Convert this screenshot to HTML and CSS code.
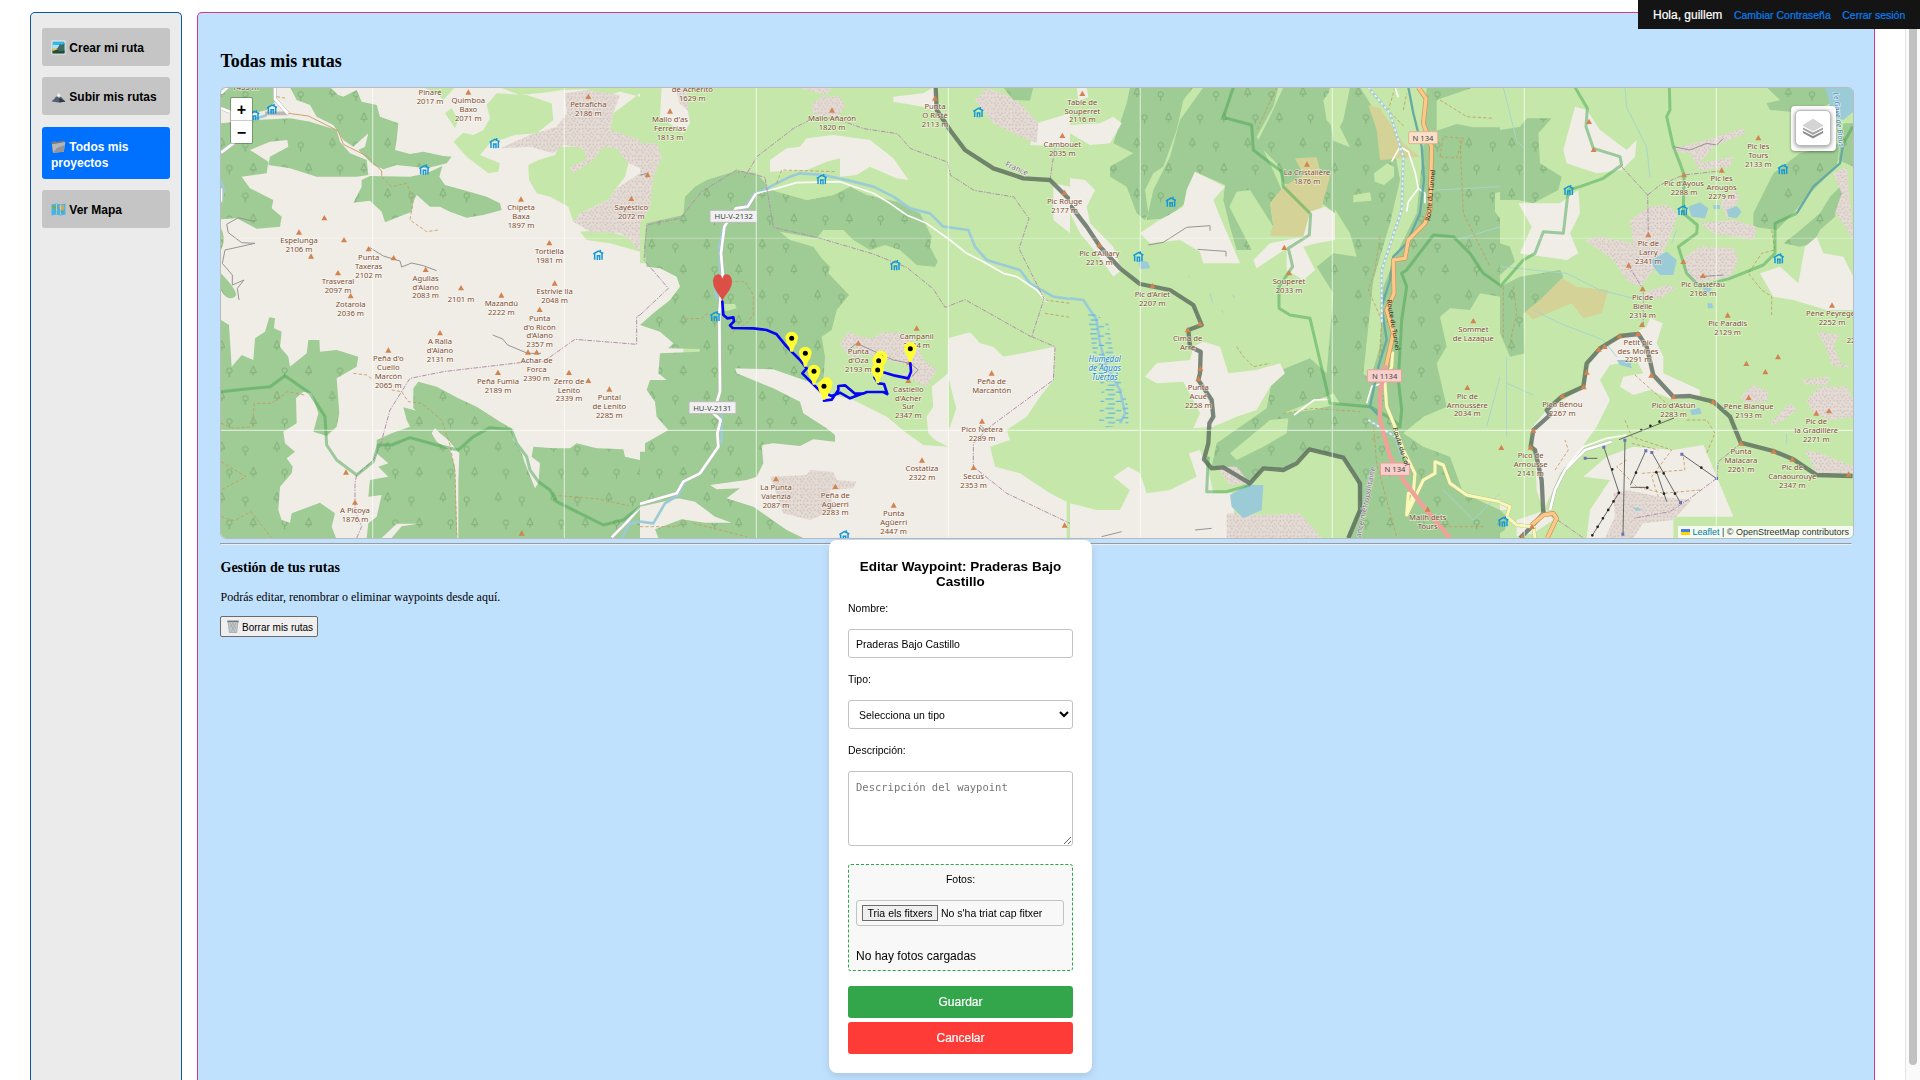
FILE: index.html
```html
<!DOCTYPE html>
<html lang="es">
<head>
<meta charset="utf-8">
<title>Todas mis rutas</title>
<link rel="stylesheet" href="styles.css">
</head>
<body>
<div class="page">
  <nav class="sidebar">
    <a class="nav-item"><svg class="ico" viewBox="0 0 15 15"><rect x=".5" y=".5" width="14" height="14" fill="#f4f1e4"/><path fill="#35b5e8" d="M1.5 1.500h12v12h-12z"/><path fill="#a9e3f5" d="M1.500 5h12v4h-12z"/><path fill="#3d6b62" d="M6 9l3-5 2 1 2.500-2v10H7z"/><path fill="#2c4a2c" d="M1.500 9.500l4-1 3 3 5-1v3h-12z"/><path fill="#e9c766" d="M1.500 8h3l2 1.500-5 1.500z"/></svg> Crear mi ruta</a>
    <a class="nav-item"><svg class="ico" viewBox="0 0 15 15"><path fill="#55606f" d="M.5 12.500L4 9l3-4.500L8.500 5l2.500 4 3.500 3.500-7 1z"/><path fill="#eef2f6" d="M5 7.500L7.200 4l1.600.8L10.500 8 9 7.500l-1 1.500-1-1.500z"/><path fill="#2e3742" d="M8 9l2 1 4.500 2.500-6 1z"/></svg> Subir mis rutas</a>
    <a class="nav-item active"><svg class="ico" viewBox="0 0 15 15"><path fill="#75797c" d="M.5 3l4-1 1 1L13 1.500l.8 1-1 10.500-11 .8z"/><path fill="#b4b7b9" d="M1 5.200L14.300 3l-1.500 9.800-10.800 1z"/><path fill="#92969a" d="M6 9l7.500-3-.8 6.800-10.700 1z"/></svg> Todos mis proyectos</a>
    <a class="nav-item"><svg class="ico" viewBox="0 0 15 15"><path fill="#48b4e6" d="M.5 2.500l5-1 4 1 5-1v11l-5 1-4-1-5 1z"/><path fill="#80a652" d="M1 4l5-.5L7 6 4.500 8 2 6z"/><path fill="#d0a75a" d="M8 4l5-1 .5 4-3 2L9 7z"/><path fill="#678d45" d="M4.500 8.500l2 1-1 3zM9 8l2.500 1-.5 3z"/><path stroke="#d4eefa" stroke-width=".6" d="M5.500 2v10M9.700 3v10"/></svg> Ver Mapa</a>
  </nav>
  <main class="content">
    <h2 class="title">Todas mis rutas</h2>
    <div class="map">
      <svg class="map-canvas" viewBox="33 24 4896 1350">
        <defs>
          <pattern id="wood" width="166" height="152" patternUnits="userSpaceOnUse">
            <path fill="#9fcb94" d="M0 0h166v152H0z"/>
            <g fill="none" stroke="#78a770" stroke-width="2.400">
              <path d="M35 22l-9 20h18zM35 42v9"/><circle cx="106" cy="43" r="8"/><path d="M106 51v12"/>
              <path d="M130 98l-9 20h18zM130 118v9"/><circle cx="58" cy="112" r="8"/><path d="M58 120v12"/>
            </g>
          </pattern>
          <pattern id="scree" width="53" height="47" patternUnits="userSpaceOnUse">
            <path fill="#e6dbd4" d="M0 0h53v47H0z"/>
            <path fill="none" stroke="#c2bdb9" stroke-width="3.500" d="M3 4l4 2M13 2l3 4M24 7l5-2M35 3l2 4M46 5l4 3M7 13l3 3M18 12l5-2M29 15l4 3M41 12l3 4M2 22l5 2M13 24l3-4M24 21l3 4M35 24l3-3M46 20l4 3M6 31l5-2M18 32l3 3M29 30l5-1M41 31l3 3M2 41l4-2M13 40l4 3M24 42l3-4M36 39l3 4M47 42l4-3"/>
          </pattern>
          <pattern id="marsh" width="52" height="28" patternUnits="userSpaceOnUse">
            <path stroke="#5db4e3" stroke-width="3.500" d="M2 5h26M34 12h16M10 20h22"/>
          </pattern>
          <path id="peak" fill="#d28350" d="M0-9L9 7H-9z"/>
          <g id="hut" fill="none" stroke="#1597d8" stroke-width="4.500"><path d="M-15-3L0-12l15 7M-11-3v17M11-5v19M6-16v7M-3 15V2h7v13"/></g>
          <g id="pin"><path fill="#ff3" d="M-4 40L-7 27Q-18 13-19-1a19 19 0 0 1 38 0Q18 13 7 27L4 40z"/><circle r="7.500" fill="#000"/></g>
        </defs>

        <!-- Western sector -->
        <svg x="0" y="0" width="1290" height="1410" viewBox="0 0 1290 1410">
          <path class="bare" d="M0 0h1290v1410H0z"/>
          <path class="grass" d="M640 22h95l-35 38-20-20zM705 100l20-15 20 35-10 25zM870 22h420v28l-60-15-50 15-50-22-70 2-60 8-70 7zM760 158l30 7 30-15 20-35-10-40 30-35 90 5 75 25 5 50-50 40-65 5-75 25-30 35 60 25-5 25-30 5-65-50-40-45zM955 255l30-15 50-15 10-25 65 0 20 15 50-15 50 5 28 35-13 50-30 40-20 30-45 20-40 20-20 25-15-45-55-30-40-10-23-40zM1290 40l-80 60-10 50 30 25 60 5zM1110 455l70-5 70 20 40-10v55l-90-25-70-10z"/>
          <path class="scree" d="M870 205l90-40 80-25 30-40-5-60 65-10 100 15-20 55-10 50 90 30v85l-40-20-30-40-40-5-30 40-60 40-10-20 50-20-10-35-60-10-30 25-70-20zM1090 425l20-25 85-40 25-35 70-45v235l-30-35-30-20-90-5z"/>
          <path class="wood" d="M33 22h167v38l-30 30-40 10-97-10zM33 130l107-10 100-5 60 10 80 25 10 35 30 35 50 20 5 45-35 5H320l-80-25-65-10 5-25 55-30-3-20-52 5-60 25 55 35-5 35-75 10 25 35 70 35-5 25 30 25-5 30-70 6-60-31-47 3zM240 22l20 38 40 15 20 35 50 25 30 45 30 20 45-40-10 40-20 10 45 45 30 13 40-13 90 10 60-15 15-20-25-2-60-13-40 7-45-12 5-30 5-50-55-20-10-35-45-10-15-35-40 20-15-5-25-23zM455 300l25-12 120 2 50-10 47-22-9 32 17 25 55 15 70 20 40 20 5 20-55 15-50 8-50-18-30-15h-30l-40-35-10 20-5 30-80 32-10-32-35-33-50 6 25-48zM33 445q17 30 0 65zM33 580q57 60 42 70-25 15-42-20zM33 720l24 15 8 125 30-35 35 15 5-65 30-20 13-43 17 3-3 30 23 10-5 45 25 30 5 30 50-40 5-40h33l2 35 50-5 65 20-5 30-60 35 8 105-8 40-30 28-40-13 15-55-20-60-25-5-22 20 2 75-40 25 5 35 30 25-25 20 18 25-3 20-35 40-5 70 10 30 25 8 5-28 85-32 45 32-10 40 13 34H33zM610 925l15-20 55 15 65 35 55 25 70 45 35 20 5 35 25 40 10 30 30 75 10-15 5-60-25-20 5-30 60 5h50l20-15 60 15 80 3 5 22 45 10v234H745l0-174 3-80-33-40-25-20-30-30-50-45zM580 982l50 13 50 40-15 25 15 25 40 25 15 50 7 214H545l30-35 50-8-65 0-45 43h-45l5-44 25-20 15-65-40 5 5-50 55-10-30-30 30-10-35-30v-40l45-20 55-20-10-20z"/>
          <path class="river" d="M33 300l8 30-8 40M40 215l30-22M130 118l40-12M1290 1325l-30 5-25 44"/>
          <path class="casing" d="M33 40l20-18M33 85l27 10M195 22v35l40 45M235 100h-70M33 218l40-30M33 325v40M1205 1372l45-45 40-45"/>
          <path class="road" d="M33 40l20-18M33 85l27 10M195 22v35l40 45M33 218l40-30M33 325v40M1205 1372l45-45 40-45"/>
          <path class="track" d="M235 100l60 8 90 45 15 40 70 35 45 45v15"/>
          <path class="footpath" d="M200 50l30 5M515 290l30 30 45-10 20 50-10 60 50 35 35-5M430 880l40 5 20 15M545 930l30 5 20 30 40 5 60 50 25 75 15 80 5 190M33 1030l40 15 55-5 5-70 50 0 50-35 50 10M33 1145l75 45-75 40M33 1310l40 12 50-27 60 77M1045 1247l120 10 90 20"/>
          <path class="boundary" d="M440 1374l15-34-20-50v-80l5-25 50-45 20-40 30-110 60-95 100-20 230-27 70-3 95-67 185 15v-83l10-5"/>
          <path class="cliff" d="M135 425l-50-12-35 20 5 25 40 30 40 2-90 20-8 40 30 35v30l35-15-20 25 5 35M480 503l40 25 50 15 5 18 30-12 35 8 40 15M848 765l30 12 15 18 60 25h40"/>
          <path class="reserve" d="M33 935l97-10 50-5 45-33 75 53 45 70 5 85 30 45 60 45 50-40 15-50h40l55-22 80 22 65 15 45-40 50-27 65 7 15 40 30 40 10 40 25 35 35 25 20 35 40 20 100 50 60-15 50-40"/>
        </svg>

        <!-- Hecho valley -->
        <svg x="1290" y="0" width="1290" height="1410" viewBox="0 0 1290 1410">
          <path class="grass" d="M0 0h1290v1410H0z"/>
          <path class="bare" d="M0 550h130v824H0zM285 865l115 3 120 42 40 30 80 20 100 50 60 50 50 35 75 5v274H340L200 1200l170-100zM390 240l50-35 40-5 20-25 80-10 110 15 70 55 45 65-35-5-80-35-40 25-50 5v-55l-40 10-60 25-110 5zM65 22h40l35 48 10 60-20 30-70-50zM760 50l90-10 30-18 10 28-5 45-35-15-90-15zM1190 130l100-30v100l-120-5zM1240 310l50 10v140l-50-40zM925 775l65-18 30 33 40 10 30 30 80-15 75-15-5 100-40 50-40 60-60 40 10 30-60 20 15 60 75 20 90 60 50 25v109H925v-274l-40-20-20-20-5-50 20-30-5-60 50-40z"/>
          <path class="grass" d="M925 890l12 50 12 45-20 60-4 0zM1070 1130l60-30 60-70 100-50v285l-50-25-90-60-75-20z"/>
          <path class="scree" d="M600 790l25-35 35 15 40 5 30-20 60 5 40 30 20 50 40 30-30 50-40-20-40-20-40-10-120-50zM390 1190l110-5 10-15 70 5 10 25 60 5-10 20-70 5 10 60-70 30-80-20zM515 75l30-25h55l15 30-25 30-70-5zM470 22h105l-15 23zM0 190h50l15 40-25 60-10 90-30 50zM105 22h35l5 70-25-20zM1005 60l35-35 60 20 40 25 55 60-5 60-60-25-70-35z"/>
          <path class="grass" d="M625 800l75 30 100 25 20 25-60 0-60-20z"/>
          <path class="wood" d="M1090 22h90l-10 40-50-2zM20 430l110-25 5-55 30-30 35-20 90-28 60 8 35 40 15 10 100 30 80-15 50-25 50 25 90 20 70 35 35 70-5 30 23 45-8 15-55-5-50-45-45-15-45 15-50-30-30-30h-60l-20 25-110-20 30 25 70 20 25 35 25 25-5 20 62 65-37 45-15 60-30 20 10 60-5 75-30 5-120-42-115-3 5 15 110 45 80 40 10 35 70 45 25 20v20l-65-7-40 20-80-8-35 5 5 55-20 40-30 10-110 15 20 13 70-3-40 30 80 25 100 70 50 24H0v-259l15 0v-25l35-20 35-20-35-40-5-45-25-35 10-30h50l-25-20 5-60 118-5 2-8-95-2 15-15-40-35-60-20 40-35 50-40 30-40-10-30-50-25-40-5-8-60z"/>
          <path class="bare" d="M0 1280l115-25 50 10 60 45 50 18-80 0-70-10-80 30 10 26H0z"/>
          <path class="grass" d="M240 672l45 0 5 13-30 8-20 0zM380 320l60-20 110 5 90 10-60 30-80 15-90-25z"/>
          <path class="river" d="M0 1325l40 5 35-60 40-25 20-40 50-30 48-75M245 1090v-90M232 660l-6-30 16-40-4-90 12-60 60-50 30-45 70-35 40-20 30-10 70 5 90 20 60 15 60 30 50 35 60 15 40 40 75 10 20 50 35 40 100 30 30 40 70 40 50 7"/>
          <path class="casing" d="M0 1272l110-32 20-35 50-25 55-80-3-40 10-40-22-20 20-65-2-235 10-120-5-60 10-80 35-55 35-5 25-40"/>
          <path class="road" d="M0 1272l110-32 20-35 50-25 55-80-3-40 10-40-22-20 20-65-2-235 10-120-5-60 10-80 35-55 35-5 25-40"/>
          <path class="lane" d="M350 340l60-15 60-17 130-3 100 35 50 30 50 35 60 25 70 50 50 40 50 25 60 35 40 10 60 40 30 35"/>
          <path class="footpath" d="M410 310l15-40 160 5M135 717l50-2 20-15M270 605h45l25 40v60l-20 25-50 30M1215 660l75 10M1215 700l75 12M0 1340l110 0 30-18M160 1330l160 40"/>
          <path class="boundary" d="M0 705l85-80-73-85 8-105 100-20 65-80 105-65 85 22 25 150 130 30 170 50 100 40 80 65 35 55 60-23 200 112 37-115-75-150 30-90-45-65-120-20-70-45-10-40-110-40-40-45-100-15-90-32h-60l-60 30-110 85-40 65M1175 770l70 30-5 100-190 140-50 50v70l100 80 190 90M1230 300l15-100"/>
          <path class="cliff" d="M625 810l25-20 110 50 50 10 25 20-20 20M0 285l25-5"/>
          <path class="frontier" d="M887 22l3 68 40 60 45 60 85 55 90 30 80 5 60 60"/>
          <g class="shield"><rect x="210" y="391" width="141" height="36" rx="3"/><text x="281" y="417">HU-V-2132</text><rect x="147" y="965" width="141" height="36" rx="3"/><text x="217" y="992">HU-V-2131</text></g>
          <text class="country" transform="translate(1094 258) rotate(24)">France</text>
        </svg>

        <!-- Aspe valley -->
        <svg x="2580" y="0" width="1290" height="1410" viewBox="0 0 1290 1410">
          <path class="grass" d="M0 0h1290v1410H0z"/>
          <path class="wood" d="M180 22h190l-30 38-20 90-40 110-30 20-25 50 10 70-10 20-25-20-30-80-50-30v-30l70-40-60-30 20-60 20-60zM400 22h225l-15 58-50 90 40 80 35 80-35 40 10 70-70-110-40 5-22 45 67 130h-45l-20-70-20-80 5-45-90-40-25 55-5 40-55 45-60 5 20-90 50-100 30-110zM640 22h150l-30 38 10 60 60 70v40l-40 40 5 130-25-20-70-50-60-20-20-60-60-60 40-80zM840 22h450v628l-60-10-30 50-60-5-30 25 20 90-30 50 30 130-70 30-60 50 60 40 80 30 40 110 110 50v84H830l40-94-10-90-40-55-100-25-70 55h-70l-40 45-60-35-55-15 15-70 150-105 20-105 110-45 50 45 20-240-50-80 50-40 70 10-20-70-50-80-10-180 40-80z"/>
          <path class="grass" d="M870 22h200l-10 178-20 200-50 100-50 120-10 180-30 100-20-20 30-280 50-170 30-130-20-110-70-120zM912 280l40-30 20 10v30l-30 25-28-10zM850 345l50-8 5 25-55 5zM480 1120l120-100 55-5-5 45-70 40-80 40zM1100 60l110-38h80v120l-80 0-50-10-60 20zM1275 340l15-5v80l-15-20zM640 1000l100-40 50-20 20 30-80 20zM780 22l30 0 0 120 30 60-50-20-20-120z"/>
          <path class="tan" d="M895 75l35 10 50 75 20 30 50 40-120 10-10-90zM675 235l65-3 10 38 30 20-25 90-55 90-100-2 10-38-10-60 40-50 60-35z"/>
          <path class="bare" d="M350 330l25-55 90 45-35 40 20 50 60 140H400l-10-35-60-35-90 10-30-30 50-35 80-45zM550 540l50-50 100-20 20-75 45-15 30 20v80l-55 10-40 10 35 70-35 30-50-30v-65l-90 60zM0 295l45 5 30 30-25 50 10 50 70 70 25 70-25 20-50-70-50-60-30-60zM0 135l90-5 40-20 25 20-35 60-60 5-60-35zM225 890l35-40 100-10 10-40 30-15 50 15 25 80 85-10 70-20 15 30-45 40-40 70-60 20-70 30-60 5 20-45-50-95-80 5zM0 1270l80 20h70l30-60-50-40 45-30 35 20 20 60 70-10 80-40-23-70 33-10 25 60 15 70h70l-20 134H0zM20 22h30l5 30-30 10z"/>
          <path class="scree" d="M440 1160h60l40 50-60 5zM470 1300l110 5 110-5 65 74H470z"/>
          <path class="water" d="M480 1245l50-30h50l-5 75-55 25-35-35zM203 540l30 5 8 20-30 3z"/>
          <path class="stream" d="M420 640l8 30M485 645l10 8M455 690l5 8M355 590l5 2M1290 440l-130 40M1100 330l190-10M1290 890l-40 150M1120 1230l90 90 80-80"/>
          <path class="river" d="M0 655l40 5 40 60 10 70 20 70 40 70 15 70-15 30"/>
          <path class="marsh" d="M50 685l65 45 20 120 40 130v55l-90 10 10-120-30-130z"/>
          <path class="footpath" d="M620 22l-60 130M975 22l-20 70 50 50M1110 60l80 50 80 5M1110 230l10-60 60 5-20 60zM1170 180l10 220 80 160M930 470l-15 100-20 60 40 90-10 160M640 1000l90-15 140 10M500 800l20 30 30 30 50-10M910 1030l10 120 60 220M1120 1340h120M960 1060l-60 20M1000 90l10-50"/>
          <path class="lane" d="M975 22l10 30M965 245l25-45 25 15 20 60 10 50-30 40-5 30M1045 325l20 15v30M672 1005l60-45 45-2M890 970l15-50 25-8"/>
          <path class="reserve" d="M490 22l-30 90 85 23 5 75 85 65 5 45 82 82-4 63-63 40 13 55-41 60v65l33 20 60 10 60 255 120 10 70 40 20 20 5-50-10-90 10-180 15-100-15-40 15-10 80-105 60 5 50 50 40 60 60 42M415 1130l-5 105 60 0 70-20"/>
          <path class="teal" d="M1015 22l15 78 25 100 7 100-12 100-40 90-40 40-10 70-25 80 15 100-25 80-25 120 30 30"/>
          <path class="rail" d="M895 22l65 78 40 130-5 160-60 180v160M895 1020l80 50 20 60"/>
          <path class="raildash" d="M895 22l65 78 40 130-5 160-60 180v160M895 1020l80 50"/>
          <path class="yellow-casing" d="M968 815l-3 45-20 50 5 70 25 60 25 70 35 70-5 60-20 65 5-65 15 0M1010 1305l50-105 35-20v-35l25 10 20 55 50 35 100 20"/>
          <path class="yellow" d="M968 815l-3 45-20 50 5 70 25 60 25 70 35 70-5 60-20 65 5-65 15 0M1010 1305l50-105 35-20v-35l25 10 20 55 50 35 100 20"/>
          <path class="trunk-casing" d="M1045 22l23 33-8 75 25 70-5 190-15 40-50 50-10 55-35 5 2 100-22 50 20 70-22 100"/>
          <path class="trunk" d="M1045 22l23 33-8 75 25 70-5 190-15 40-50 50-10 55-35 5 2 100-22 50 20 70-22 100"/>
          <path class="red" d="M946 855l-16 85v80l30 110 40 70 60 80 80 94"/>
          <path class="cliff" d="M235 495l45-8 70-45 70-5v15M383 508l40 3 45 3v15M375 1350l50-5M95 1370l60-15"/>
          <path class="frontier" d="M0 375l50 65 40 60 60 65 60 47 90 18 70 45 25 60-40 15 5 50 32 15-2 65-5 20 40 60 5 50-12 20-3 60-13 48 23 27 35-3 80 48 40-45 60 5 40-20 38-42 102 25 50 77v80l-35 84"/>
          <g class="shield peach"><rect x="1016" y="155" width="87" height="36" rx="4"/><text x="1059" y="182">N 134</text></g>
          <g class="shield pink"><rect x="892" y="869" width="103" height="37" rx="4"/><text x="944" y="896">N 1134</text><rect x="931" y="1149" width="88" height="37" rx="4"/><text x="975" y="1176">N 134</text></g>
          <text class="street" transform="translate(1080 424) rotate(-84)">Route du Tunnel</text>
          <text class="street" transform="translate(950 660) rotate(80)">Route du Tunnel</text>
          <text class="street" transform="translate(968 1045) rotate(72)">Route du Col</text>
          <text class="country" transform="translate(872 1374) rotate(-78)">ance métropolitaine</text>
          <g class="wetland"><text x="104" y="846">Humedal</text><text x="104" y="872">de Aguas</text><text x="104" y="899">Tuertas</text></g>
        </svg>

        <!-- Astún and Ayous -->
        <svg x="3870" y="0" width="1290" height="1410" viewBox="0 0 1290 1410">
          <path class="grass" d="M0 0h1290v1410H0z"/>
          <path class="tan" d="M65 690l115-100 50 30 95 10-20 70-55 15-35-45-115 48z"/>
          <path class="wood" d="M0 150l60-10 20-25h75l-40 45 5 90 65 40-10 40-75 40-45-10H0zM0 490l30 10 15 45-45 40zM0 620l60-30 120-20 10 20-70 70-50 40 5 120-45 10-30-70zM800 22h180l10 48-60 30-120-10-10-20 40-10zM760 400l60-120 80-60 120-30-10 70-80 80-50 60-50 50-70-10zM850 490l40-30 70-60 30-50 50-50-35 110-45 40-20 40-40 10zM1030 130h30v130l-45-20zM0 1290l20 20-5 40-15 10z"/>
          <path class="bare" d="M225 80l35 10 40 60 80 60 30-30-5 50-40 40-75 10-90-30-10-40zM55 370h125l55-40 5 70-30 60 25 60-35 20-140-20 35-80zM780 580l60-20 55 50 20-110 35-30 20 50 60 10 30 60v100h-80l-100-30-60-10zM90 1050l50-60 115-70 15-70 40-50 130-60 10-25 38 15-18 60 20 40v50l110 50v15l-80 15-70-30-50 15-40-25 10-30 60-10-20-40-80 15-30 45 30 60-40 80-50 70-60 70-30 70-20 40-20-60-5-120zM320 1130l80-30 120 10 90-15 40 95 50 120H520v64H260l10-84 60-90-80-10zM50 1320l90-30 20 30-60 40-50 10zM0 1290h20v-20H0z"/>
          <path class="scree" d="M520 205l100-25 110-35 5 15-95 40-40 50 100-20-10 30-90 10-30-50-50-5zM255 480l45-10 100 20-10-70 60-40 50-5 35 25-25 70-40 90-50 60-40-20-40-60zM440 635l60-20 30 10-50 30-60 0zM555 530l45-30 100 5 15 35-25 50-110 20-25-40zM600 430l100-10 70 20-10 40-120-20zM660 370l40-40 20 20-35 70zM920 960l40-40h80l20 40v50l-70 10-50-20zM905 900l85-10-10 25h-60zM720 950l40-35 45 20-5 30-60 5zM340 1240l40-10 100 20 95 10-55 60-90 10-30 44h-85l30-64zM1000 280l40-20 20 220-30-50-25-30 20-60zM915 1110l45 10 100 40v20H950zM810 1030l60-60 20 20-40 30-35 15zM950 755l70 10-20 30 20 50 35 20-60-10-20-60z"/>
          <path class="water" d="M565 380l35-13 25 18-10 30-40-5zM680 390l30-12 15 17-15 20-25-5zM640 375h20v12h-20zM455 540l45-25 30 25-10 45h-40l-20-25zM350 840l40 0 5 25-35-10zM570 990l30-7 5 18-30 5zM622 670l15 0 2 15h-15zM610 620l25 5-5 12-20-2zM975 22h85v73l-30 25-30-10zM395 1280l35 8-20 5z"/>
          <path class="stream" d="M375 22l5 60 60 120 10 90M10 22l25 100 15 60 20 20M0 560l200 20 100 50 100 25M100 690l80 40 130 50 40 50M20 830v80l80 35M20 910v160M530 450l-15 40M860 1060v30"/>
          <path class="footpath" d="M40 620l10 80-20 90M10 620v160M815 450l10 60-40 10-40 60 40 50 30 20v55M375 1020l20 50 120 40-60 80 20 60M560 1020l60 0 25 40-25 60M165 1170l40-60-10-30M405 885l100 90 30 30M550 1130l5 40-130 10M380 1140l-30 20 60 60 80 20 110-10M395 1090l80 20"/>
          <path class="casing" d="M150 1290l15-60 30-60 60-60 80-25"/><path class="road" d="M150 1290l15-60 30-60 60-60 80-25"/><path class="lane" d="M200 1160l50-60 70-25 60-10"/>
          <path class="boundary" d="M365 260l78 85 2 120M443 345l37-30 70-30 110-12M385 555l45 75 0 110M650 1195l5-50 68-55M650 1195l-80 60-60 40-110 20M130 1290l120 84"/>
          <path class="cliff" d="M520 200l50 10 50-20 30 5 20-20M600 590l70-5"/>
          <path class="reserve" d="M225 22l37 63-4 55 22 65 80 25 5 25-55 40-70 25-35 10-15 130-60-5-25 65-35 20-70 80M508 22l2 68-10 20 20 90 20 50 12 35-2 115 42 35-2 25-55 40 25 80 40 40 90-25 100-40 35-35v-90l65-30M1058 140l-28 50"/>
          <path class="teal" d="M1030 190l-10 60-80 70-50 80"/>
          <path class="frontier" d="M60 1374l35-34 35-40-5-100-20-90-13-10 8-50 50-45-10-15 45-40 65-30 10-70 40-45 60-37 55-6 25 38 20 85 60 65 50-2 70 17 50 45 32 78 98 25 60 25 70 47 108 3"/>
          <path class="yellow-casing" d="M0 1268l30 12-10 30 30 25 50 5 5 34"/><path class="yellow" d="M0 1268l30 12-10 30 30 25 50 5 5 34"/>
          <path class="trunk-casing" d="M95 1335l35-30 30-5 10 15-28 59"/><path class="trunk" d="M95 1335l35-30 30-5 10 15-28 59"/>
          <path class="lift" d="M277 1366l80-128-45-136M357 1079l165-65M369 1362l6-281M391 1222h53M391 1215l46-102M456 1118l85 150M470 1175l30 90M546 1123l104 73M256 1135h36"/>
          <path class="lift-towers" d="M277 1366l80-128M424 1050l63-29M337 1168h1M408 1178h1M491 1180h1M604 1163h1M442 1223h1M469 1177h1M492 1241h1M525 1241h1"/>
          <path fill="#6a72b8" d="M251 1130h9v9h-9zM307 1097h9v9h-9zM370 1076h9v9h-9zM433 1108h9v9h-9zM451 1113h9v9h-9zM541 1118h9v9h-9zM645 1191h9v9h-9zM537 1263h9v9h-9zM364 1358h9v9h-9z"/>
          <text class="lake" transform="translate(1000 38) rotate(84)">Le Gave de Bious</text>
        </svg>

        <path class="seam" d="M488 22v1352M1063 22v1352M1639 22v1352M2215 22v1352M2791 22v1352M3367 22v1352M3943 22v1352M4519 22v1352M33 1051h4896"/>
        <path class="seam faint" d="M33 475h4896"/>
        <g id="labels"></g>
        <g transform="translate(1290 0)">
          <path class="route" d="M247 665l3 40 12 10 18-3 2 12-12 12 8 8 62 1 40 5 30 13 30 37 40 40 20 25-13 15 18 18 37 37M552 962l23-3 20-29 0-12 20-2 30 25 25 0 10-5 50 0 12 6-10-30-17-2-12-18M555 940l20 8 25-10 30 17 40-15M725 875l40 12 40 8 8-20-2-25"/>
          <path fill="#dc4f47" d="M247 662C239 645 219 628 219 604c0-22 24-31 28-8 5-23 29-14 29 8 0 24-20 41-29 58z"/>
          <use href="#pin" x="455" y="775"/><use href="#pin" x="496" y="820"/><use href="#pin" x="522" y="874"/><use href="#pin" x="559" y="912"/><use href="#pin" x="552" y="919"/><use href="#pin" x="723" y="832"/><use href="#pin" x="716" y="842"/><use href="#pin" x="713" y="870"/><use href="#pin" x="811" y="806"/>
        </g>
      </svg>
      <div class="zoom"><span>+</span><span>−</span></div>
      <div class="layers"><div class="layers-button"><svg viewBox="0 0 22 21"><path fill="#8c8c8c" d="M1 15l10 5.500L21 15v-2l-10 5-10-5z"/><path fill="#a3a3a3" d="M1 11.500l10 5.500 10-5.500v-2l-10 5-10-5z"/><path fill="#d4d4d4" stroke="#bbb" stroke-width=".4" d="M11 1l10 6.500-10 5.500L1 7.500z"/></svg></div></div>
      <div class="attribution"><svg viewBox="0 0 12 8"><path fill="#4C7BE1" d="M0 0h12v4H0z"/><path fill="#FFD500" d="M0 4h12v4H0z"/></svg> <a>Leaflet</a> | © OpenStreetMap contributors</div>
    </div>
    <hr class="rule">
    <h3 class="subtitle">Gestión de tus rutas</h3>
    <p class="hint">Podrás editar, renombrar o eliminar waypoints desde aquí.</p>
    <button class="clear"><svg viewBox="0 0 12 13"><path fill="#c3c8cb" stroke="#92989c" stroke-width=".6" d="M1 1.500h10l-1.300 11H2.300z"/><path fill="none" stroke="#858b90" stroke-width=".4" d="M3 3l5 9M6 3l3 6M9 3L4 12M6 3L3 8"/><path fill="#6f757a" d="M.3.600h11.400v1.500H.3z"/></svg><span>Borrar mis rutas</span></button>
  </main>
</div>

<div class="userbar"><span>Hola, guillem</span><a>Cambiar Contraseña</a><a>Cerrar sesión</a></div>
<div class="scrollbar"><div class="thumb"></div></div>

<form class="modal">
  <h3 class="modal-title">Editar Waypoint: Praderas Bajo Castillo</h3>
  <label>Nombre:</label>
  <input class="field" type="text" value="Praderas Bajo Castillo">
  <label>Tipo:</label>
  <div class="field select"><span>Selecciona un tipo</span><svg viewBox="0 0 10 7"><path fill="none" stroke="#000" stroke-width="2" d="M1 1l4 4 4-4"/></svg></div>
  <label>Descripción:</label>
  <textarea class="field area" placeholder="Descripción del waypoint"></textarea>
  <div class="photos">
    <label>Fotos:</label>
    <div class="file"><span class="file-button">Tria els fitxers</span><span>No s'ha triat cap fitxer</span></div>
    <p>No hay fotos cargadas</p>
  </div>
  <button class="action save" type="button">Guardar</button>
  <button class="action cancel" type="button">Cancelar</button>
</form>
<script src="map.js"></script>
</body>
</html>
```
FILE: styles.css
```css
* { box-sizing: border-box; }
body { margin: 0; height: 1080px; overflow: hidden; background: #fff; font: 12px "Liberation Serif", serif; color: #000; }
.page { display: flex; gap: 15px; padding: 12px 45px 0 30px; height: 1080px; }
.sidebar { width: 152px; border: 1px solid #0a55ae; border-bottom: 0; border-radius: 5px 5px 0 0; background: #ebebeb; padding: 15px 11px; display: flex; flex-direction: column; gap: 11px; }
.nav-item { padding: 12px 9px 10px; border-radius: 3px; background: #c5c5c5; font: bold 12px/16px "Liberation Sans", sans-serif; min-height: 38px; }
.nav-item.active { background: #0070ff; color: #fff; min-height: 52px; padding-top: 12px; margin: 1px 0 0; padding-bottom: 8px; }
.ico { width: 15px; height: 15px; vertical-align: -3px; }
.content { width: 1678px; border: 1px solid #d03a8e; border-bottom: 0; border-radius: 5px 5px 0 0; background: #c0e1fe; padding: 0 22px; }
.title { font-size: 18px; line-height: 20px; margin: 38px 0 16px; text-indent: .5px; }

.map { position: relative; width: 1634px; height: 452px; border: 1px solid #bbb; border-radius: 6px; overflow: hidden; }
.map-canvas { display: block; width: 1632px; height: 450px; font-family: "Noto Sans", sans-serif; }
.bare { fill: #f0ede6; }
.grass { fill: #c5e8aa; }
.wood { fill: url(#wood); }
.scree { fill: url(#scree); }
.marsh { fill: url(#marsh); }
.tan { fill: #d4d297; }
.water { fill: #9bcbd7; }
.river, .stream, .teal, .casing, .road, .lane, .track, .footpath, .boundary, .cliff, .reserve, .frontier, .rail, .raildash, .trunk, .trunk-casing, .yellow, .yellow-casing, .red, .lift, .lift-towers, .seam, .route { fill: none; stroke-linejoin: round; }
.river { stroke: #9bcbd7; stroke-width: 8; }
.stream { stroke: #a6d5cc; stroke-width: 3; }
.teal { stroke: #67aaa4; stroke-width: 7; }
.casing { stroke: #b9b9b5; stroke-width: 11; }
.road { stroke: #fff; stroke-width: 8; }
.lane { stroke: #fdfdfb; stroke-width: 5; }
.track { stroke: #d0a071; stroke-width: 3; }
.footpath { stroke: #c39a5f; stroke-width: 2.500; stroke-dasharray: 10 6; }
.boundary { stroke: #b38fae; stroke-width: 3; stroke-dasharray: 14 4 4 4; }
.cliff { stroke: #969494; stroke-width: 3; }
.reserve { stroke: #46a551; stroke-opacity: .5; stroke-width: 9; }
.frontier { stroke: #59685a; stroke-opacity: .78; stroke-width: 13; }
.rail { stroke: #a6cbd0; stroke-width: 8; }
.raildash { stroke: #eaf3f0; stroke-width: 5; stroke-dasharray: 8 7; }
.yellow-casing { stroke: #c6c484; stroke-width: 12; }
.yellow { stroke: #f7f9ba; stroke-width: 9; }
.trunk-casing { stroke: #cb9450; stroke-width: 14; }
.trunk { stroke: #fcc98d; stroke-width: 10; }
.red { stroke: #f0a19a; stroke-width: 13; }
.lift { stroke: #4d4d4d; stroke-width: 2.500; }
.lift-towers { stroke: #222; stroke-width: 8; stroke-linecap: round; stroke-dasharray: 0 30; }
.seam { stroke: #fff; stroke-opacity: .6; stroke-width: 3.500; }
.faint { stroke-opacity: .25; }
.route { stroke: #0505f2; stroke-width: 8; stroke-linecap: round; }
.shield rect { fill: #f0f0f0; stroke: #bbb; stroke-width: 3; }
.shield text { font-size: 23px; fill: #444; text-anchor: middle; }
.shield.peach rect { fill: #fae0c8; stroke: #e3b58d; }
.shield.pink rect { fill: #f9cfcb; stroke: #e4a09a; }
.country { font-size: 23px; fill: #8a6d90; stroke: rgba(255,255,255,.6); stroke-width: 3; paint-order: stroke; }
.street { font-size: 20px; fill: #2b2418; }
.lake, .wetland { font-size: 22px; font-style: italic; fill: #3d84b5; stroke: rgba(255,255,255,.7); stroke-width: 4; paint-order: stroke; }
.wetland { font-size: 24px; text-anchor: middle; fill: #1583c9; }
.peak-name { font-size: 23px; fill: #7d4b2c; text-anchor: middle; stroke: rgba(255,255,255,.6); stroke-width: 4; paint-order: stroke; }

.zoom { position: absolute; left: 9px; top: 9px; width: 23px; height: 47px; border: 1px solid rgba(0,0,0,.25); border-radius: 2px; background: #fff; background-clip: padding-box; font: bold 16px/23px "Liberation Sans", sans-serif; text-align: center; }
.zoom span { display: block; height: 22px; }
.zoom span + span { border-top: 1px solid #ccc; height: 23px; }
.layers { position: absolute; right: 17px; top: 18px; width: 45px; height: 45px; padding: 4px; border-radius: 4px; background: #fff; box-shadow: 0 1px 3px rgba(0,0,0,.4); }
.layers-button { width: 36px; height: 36px; border: 1px solid #bbb; border-radius: 5px; background: #fff; box-shadow: 0 1px 4px rgba(0,0,0,.45); display: grid; place-items: center; }
.layers-button svg { width: 22px; height: 21px; }
.attribution { position: absolute; right: 0; bottom: 0; height: 12px; padding: 0 4px 0 3px; background: rgba(255,255,255,.8); font: 9px/12px "Liberation Sans", sans-serif; color: #333; white-space: nowrap; }
.attribution svg { width: 9px; height: 6px; margin-right: 0; }
.attribution a { color: #0078a8; }

.rule { width: 1632px; margin: 4px 0 0; }
.subtitle { font-size: 14px; line-height: 16px; margin: 15px 0 14px; text-indent: .5px; }
.hint { margin: 0 0 12px; line-height: 14px; text-indent: .5px; }
.clear { display: flex; align-items: center; gap: 3px; width: 98px; height: 21px; padding: 0 0 0 6px; border: 1px solid #6b6b6b; border-radius: 2px; background: #efefef; font: 10px "Liberation Sans", sans-serif; color: #000; white-space: nowrap; }
.clear svg { width: 12px; height: 13px; flex: none; }
.clear span { padding-top: 2px; }

.userbar { position: fixed; right: 0; top: 0; z-index: 5; width: 282px; height: 29px; padding-left: 15px; display: flex; gap: 11.500px; align-items: center; background: #141414; font: 12px "Liberation Sans", sans-serif; color: #fff; white-space: nowrap; -webkit-text-stroke: .2px; }
.userbar a { color: #0a7ff0; font-size: 10.500px; padding-top: 1px; }
.scrollbar { position: fixed; right: 0; top: 0; width: 15px; height: 1080px; background: #fafafa; border-left: 1px solid #e4e4e4; padding-left: 3px; }
.thumb { width: 8px; height: 1065px; background: #c1c1c1; border-radius: 0 0 4px 4px; }

.modal { position: fixed; left: 829px; top: 540px; width: 263px; height: 533px; padding: 19px; border-radius: 8px; background: #fff; box-shadow: 0 3px 8px rgba(0,0,0,.12); font: 12px "Liberation Sans", sans-serif; }
.modal-title { margin: 0 0 12px; font-size: 13.500px; line-height: 15px; text-align: center; }
.modal label { display: block; font-size: 10.500px; line-height: 13px; height: 28px; padding-top: 1px; }
.field { display: block; width: 225px; height: 29px; margin: 0 0 14px; padding: 1px 7px 0; border: 1px solid #c3c3c3; border-radius: 3px; background: #fff; font: 10.500px "Liberation Sans", sans-serif; color: #000; }
.select { display: flex; align-items: center; justify-content: space-between; padding: 1px 3px 0 10px; }
.select svg { width: 10px; height: 7px; margin-bottom: 2px; }
.area { height: 75px; margin-bottom: 18px; padding: 9px 7px; font: 10.500px "DejaVu Sans Mono", monospace; resize: vertical; }
.photos { width: 225px; height: 107px; padding: 7px; border: 1px dashed #28a745; border-radius: 3px; background: #f8f8f8; margin-bottom: 15px; }
.photos label { text-align: center; }
.file { display: flex; align-items: center; gap: 3px; width: 208px; height: 26px; padding: 0 5px; border: 1px solid #c3c3c3; border-radius: 3px; font-size: 10.500px; white-space: nowrap; }
.file-button { width: 76px; height: 16px; text-align: center; border: 1px solid #6b6b6b; background: #efefef; line-height: 15px; }
.photos p { margin: 23px 0 0; line-height: 14px; }
.action { display: block; width: 225px; height: 32px; margin-bottom: 4px; border: 0; border-radius: 3px; color: #fff; font: 12px "Liberation Sans", sans-serif; -webkit-text-stroke: .2px; }
.save { background: #33a64c; }
.cancel { background: #ff3b37; }
```
FILE: map.js
```js
// Summits: x, y of the triangle, then the label lines separated by "|".
const peaks = [
  [775,37,"Quimboa|Baxo|2071 m"],[1135,50,"Petraficha|2186 m",30],[933,358,"Chipeta|Baxa|1897 m"],[1264,356,"Sayéstico|2072 m"],
  [267,457,"Espelunga|2106 m"],[343,414],[402,480],[303,529],[476,507,"Punta|Taxeras|2102 m"],[551,534],[384,579,"Trasveral|2097 m"],
  [647,569,"Agullas|d'Alano|2083 m"],[753,624,"2101 m",42],[874,646,"Mazandú|2222 m"],[422,648,"Zotarola|2036 m"],[1018,489,"Tortiella|1981 m"],
  [1034,610,"Estrivie lla|2048 m"],[989,689,"Punta|d'o Ricón|d'Alano|2357 m"],[954,817],[980,817,"Achar de|Forca|2390 m"],
  [690,759,"A Ralla|d'Alano|2131 m"],[535,811,"Peña d'o|Cuello|Marcón|2065 m"],[864,878,"Peña Fumia|2189 m"],[1077,878,"Zerro de|Lenito|2339 m"],
  [1135,902],[1198,928,"Puntal|de Lenito|2285 m"],[408,1177],[435,1267,"A Picoya|1876 m"],[935,1360],
  [1380,94,"Mallo d'as|Ferrerías|1813 m"],[1866,91,"Mallo Añarón|1820 m"],[2175,55,"Punta|O Risté|2113 m"],[2557,167,"Cambouet|2035 m"],
  [2564,338,"Pic Rouge|2177 m"],[2120,745,"Campanil|2344 m"],[1945,790,"Punta|d'Oza|2193 m"],[2095,902,"Castiello|d'Acher|Sur|2347 m"],[2098,848],
  [2345,880,"Peña de|Marcantón"],[2316,1024,"Pico Ñetera|2289 m"],[2136,1141,"Costatiza|2322 m"],[2291,1163,"Secús|2353 m"],
  [1698,1197,"La Punta|Valenzia|2087 m"],[1876,1220,"Peña de|Agüerri|2283 m"],[2051,1276,"Punta|Agüerri|2447 m"],[2564,1336],
  [2617,41,"Table de|Souperret|2116 m"],[3291,253,"La Cristalière|1876 m"],[2668,495,"Pic d'Aillary|2215 m"],[2827,618,"Pic d'Arlet|2207 m"],[3223,503],
  [3237,579,"Souperet|2033 m"],[2970,731],[2933,750,"Cima de|Arre"],[2971,866],[2965,897,"Punta|Acué|2258 m"],[3790,723,"Sommet|de Lazaque"],
  [3772,923,"Pic de|Arnoussère|2034 m"],[3653,1288,"Mailh dets|Tours"],[4137,125],[4151,209],[4645,174,"Pic les|Tours|2133 m"],
  [4422,285,"Pic d'Ayous|2288 m"],[4535,271,"Pic les|Arougos|2279 m"],[4315,465,"Pic de|Larry|2341 m"],[4256,556],[4420,545],[4479,587,"Pic Castérau|2168 m"],
  [4298,627,"Pic de|Bielle|2314 m"],[4553,706,"Pic Paradis|2129 m"],[4866,676,"Pène Peyreget|2252 m"],[4296,734],[4229,768],
  [4284,761,"Petit pic|des Moines|2291 m"],[4166,808],[4184,800],[4130,877],[4121,921],[4057,948,"Pico Bénou|2267 m"],[4324,886],
  [4391,951,"Pico d'Astún|2283 m"],[4509,966],[4616,953,"Pène Blanque|2193 m"],[4609,851],[4704,831],[4666,876],[4857,993],
  [4819,1000,"Pic de|la Gradillère|2271 m"],[3970,1052],[3874,1103],[3962,1102,"Pico de|Arnousse|2141 m"],[4593,1090,"Punta|Malacara|2261 m"],[4691,1114],
  [4747,1138,"Pic de|Canaourouye|2347 m"],[4916,1183],[3966,1340],[3938,1371],[1313,285]
];
// Names whose summit lies outside the visible area.
const names = [[660,46,"Pinaré|2017 m"],[1447,37,"de Acherito|1629 m"],[107,30,"1455 m"],[4950,790,"2200 m"]];
const huts = [[133,106],[186,87],[854,190],[643,269],[1165,525],[1835,298],[2056,556],[1516,709],[1903,1367],[2305,97],
  [2883,366],[2785,530],[4076,331],[4719,268],[4418,391],[4706,536],[3880,1325]];

const ns = "http://www.w3.org/2000/svg";
const layer = document.getElementById("labels");
function symbol(id, x, y) {
  const u = document.createElementNS(ns, "use");
  u.setAttribute("href", id);
  u.setAttribute("x", x);
  u.setAttribute("y", y);
  layer.append(u);
}
function label(x, y, text) {
  text.split("|").forEach((line, i) => {
    const t = document.createElementNS(ns, "text");
    t.setAttribute("class", "peak-name");
    t.setAttribute("x", x);
    t.setAttribute("y", y + i * 26.7);
    t.textContent = line;
    layer.append(t);
  });
}
for (const [x, y, text, drop] of peaks) {
  symbol("#peak", x, y);
  if (text) label(x, y + (drop || 33), text);
}
names.forEach(n => label(...n));
huts.forEach(([x, y]) => symbol("#hut", x, y));
```
